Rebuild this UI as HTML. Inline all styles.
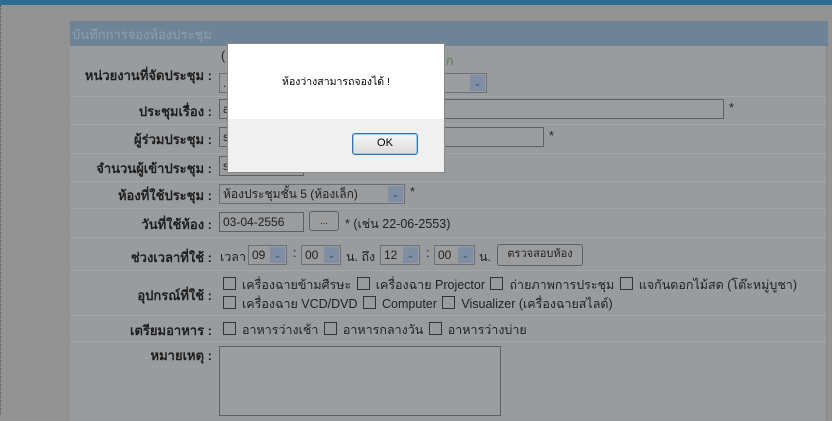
<!DOCTYPE html>
<html><head><meta charset="utf-8"><style>
body{margin:0;width:832px;height:415px;overflow:hidden;background:#939393;font-family:"Liberation Sans","Noto Sans CJK SC",sans-serif;position:relative}
.top{position:absolute;left:0;top:0;width:832px;height:5px;background:#2d6d92}
.lb{position:absolute;left:0;top:5px;width:2px;height:410px;border-left:1px dotted #555}
.panel{position:absolute;left:70px;top:21px;width:756px;height:400px;background:#999c9f;border-right:1px solid #888}
.hd{position:absolute;left:0;top:0;width:756px;height:25px;background:#6e8396;color:#8ea0b2;font-size:13px;line-height:27px;padding-left:2px}
.row{position:absolute;left:0;width:756px;border-bottom:1px solid #a3a6a9}
.lab{position:absolute;right:614px;font-weight:bold;font-size:13px;color:#1e1e1e;white-space:nowrap}
.t{position:absolute;font-size:12.5px;color:#222;white-space:nowrap}
.in{position:absolute;border:1px solid #5c6168;background:#9a9c9e;height:20px;box-sizing:border-box;font-size:12px;color:#222;line-height:18px;padding-left:3px}
.sel{position:absolute;border:1px solid #6a7078;background:#9a9c9e;height:20px;box-sizing:border-box;font-size:12px;line-height:18px;padding-left:3px;color:#222}
.sel i{position:absolute;right:1px;top:1px;width:15px;height:16px;background:#7f8ea3;font-style:normal;font-size:9px;color:#344a6e;text-align:center;line-height:16px}
.cb{display:inline-block;width:11px;height:11px;border:1px solid #333;vertical-align:-1px;margin:0 6px 0 2px}
.dlg{position:absolute;left:227px;top:43px;width:218px;height:130px;background:#f0f0f0;border:1px solid #8a8a8a;box-sizing:border-box}
.dlg .w{position:absolute;left:0;top:0;width:216px;height:75px;background:#fff;font-size:10.5px;text-align:center;line-height:77px;color:#000}
.ok{position:absolute;left:124px;top:89px;width:66px;height:22px;box-sizing:border-box;border:1px solid #3b6cb0;border-radius:3px;background:linear-gradient(#f6f6f6,#dcdcdc);font-size:11px;text-align:center;line-height:19px;box-shadow:inset 0 0 0 1px #9ccbf0}
</style></head><body>
<div class="top"></div><div class="lb"></div>
<div class="panel">
<div class="hd">บันทึกการจองห้องประชุม</div>
<div class="row" style="top:25px;height:50px"><span class="lab" style="top:19px">หน่วยงานที่จัดประชุม :</span><span class="t" style="left:151px;top:3px">(</span><span class="t" style="left:376px;top:5px;color:#5a7a4a">ก</span><div class="sel" style="left:149px;top:48px;width:268px;margin-top:-21px">.<i>⌄</i></div></div>
<div class="row" style="top:76px;height:27px"><span class="lab" style="top:4px">ประชุมเรื่อง :</span><div class="in" style="left:149px;top:2px;width:505px">a</div><span class="t" style="left:659px;top:4px">*</span></div>
<div class="row" style="top:104px;height:28px"><span class="lab" style="top:4px">ผู้ร่วมประชุม :</span><div class="in" style="left:149px;top:2px;width:325px">s</div><span class="t" style="left:479px;top:4px">*</span></div>
<div class="row" style="top:133px;height:27px"><span class="lab" style="top:4px">จำนวนผู้เข้าประชุม :</span><div class="in" style="left:149px;top:2px;width:85px">s</div></div>
<div class="row" style="top:161px;height:26px"><span class="lab" style="top:3px">ห้องที่ใช้ประชุม :</span><div class="sel" style="left:149px;top:2px;width:186px">ห้องประชุมชั้น 5 (ห้องเล็ก)<i>⌄</i></div><span class="t" style="left:340px;top:3px">*</span></div>
<div class="row" style="top:188px;height:28px"><span class="lab" style="top:5px">วันที่ใช้ห้อง :</span><div class="in" style="left:149px;top:3px;width:85px">03-04-2556</div><div class="in" style="left:239px;top:2px;width:30px;border-radius:3px;text-align:center;padding:0;font-size:9px">...</div><span class="t" style="left:275px;top:5px">* (เช่น 22-06-2553)</span></div>
<div class="row" style="top:217px;height:32px"><span class="lab" style="top:9px">ช่วงเวลาที่ใช้ :</span><span class="t" style="left:150px;top:9px">เวลา</span>
<div class="sel" style="left:178px;top:7px;width:39px">09<i>⌄</i></div><span class="t" style="left:223px;top:8px">:</span>
<div class="sel" style="left:231px;top:7px;width:40px">00<i>⌄</i></div><span class="t" style="left:276px;top:9px">น. ถึง</span>
<div class="sel" style="left:310px;top:7px;width:40px">12<i>⌄</i></div><span class="t" style="left:356px;top:8px">:</span>
<div class="sel" style="left:364px;top:7px;width:41px">00<i>⌄</i></div><span class="t" style="left:409px;top:9px">น.</span>
<div class="in" style="left:427px;top:6px;width:86px;height:22px;border-radius:3px;font-size:11px;text-align:center;padding:0">ตรวจสอบห้อง</div></div>
<div class="row" style="top:250px;height:44px"><span class="lab" style="top:14px">อุปกรณ์ที่ใช้ :</span>
<span class="t" style="left:151px;top:4px"><span class="cb"></span>เครื่องฉายข้ามศีรษะ <span class="cb"></span>เครื่องฉาย Projector <span class="cb"></span>ถ่ายภาพการประชุม <span class="cb"></span>แจกันดอกไม้สด (โต๊ะหมู่บูชา)</span>
<span class="t" style="left:151px;top:23px"><span class="cb"></span>เครื่องฉาย VCD/DVD <span class="cb"></span>Computer <span class="cb"></span>Visualizer (เครื่องฉายสไลด์)</span></div>
<div class="row" style="top:295px;height:25px"><span class="lab" style="top:4px">เตรียมอาหาร :</span><span class="t" style="left:151px;top:4px"><span class="cb"></span>อาหารว่างเช้า <span class="cb"></span>อาหารกลางวัน <span class="cb"></span>อาหารว่างบ่าย</span></div>
<span class="lab" style="top:324px">หมายเหตุ :</span>
<div class="in" style="left:149px;top:325px;width:282px;height:70px"></div>
</div>
<div class="dlg"><div class="w">ห้องว่างสามารถจองได้ !</div><div class="ok">OK</div></div>
</body></html>
